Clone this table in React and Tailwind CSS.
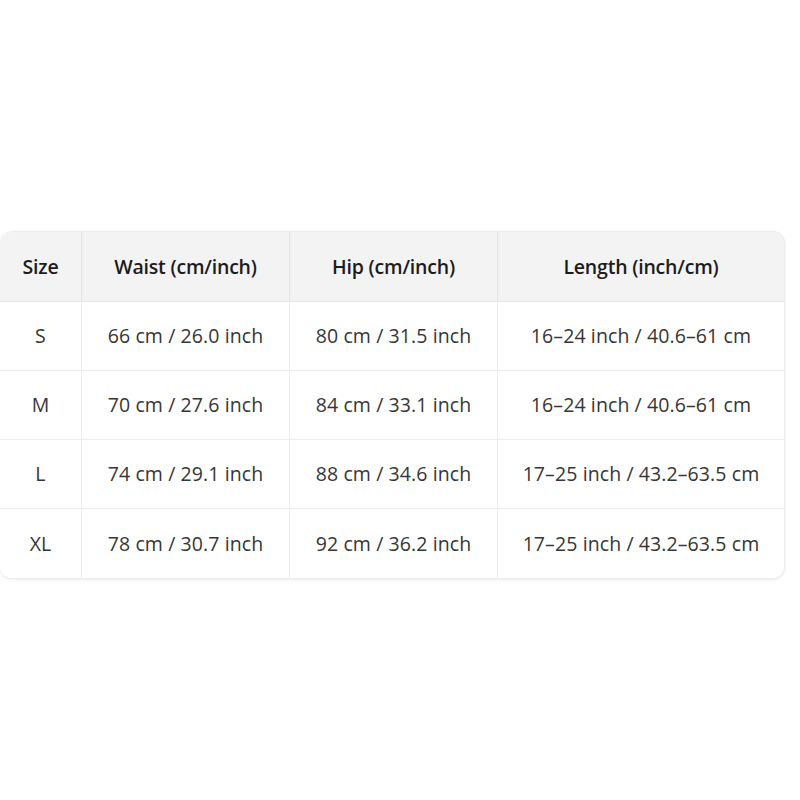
export default function App() {
    const rows = [
        ["S", "66 cm / 26.0 inch", "80 cm / 31.5 inch", "16–24 inch / 40.6–61 cm"],
        ["M", "70 cm / 27.6 inch", "84 cm / 33.1 inch", "16–24 inch / 40.6–61 cm"],
        ["L", "74 cm / 29.1 inch", "88 cm / 34.6 inch", "17–25 inch / 43.2–63.5 cm"],
        ["XL", "78 cm / 30.7 inch", "92 cm / 36.2 inch", "17–25 inch / 43.2–63.5 cm"],
    ]
    const heads = ["Size", "Waist (cm/inch)", "Hip (cm/inch)", "Length (inch/cm)"]

    return (
        <div className="w-[800px] h-[800px] bg-white pt-[231px]" style={{fontFamily: '"Open Sans", "Liberation Sans", sans-serif'}}>
            <div className="w-[785px] rounded-xl overflow-hidden shadow-[0_1px_3px_rgba(0,0,0,0.08)] border border-[#ececec] border-l-0">
                <div className="grid grid-cols-[81px_208px_208px_1fr] h-[70px] bg-[#f3f3f3] border-b border-[#e6e6e6]">
                    {heads.map((h, i) => (
                        <div key={h} className={"flex items-center justify-center text-[19.5px] tracking-[-0.2px] font-semibold text-[#1c1c1c] " + (i > 0 ? "border-l border-[#e3e3e3]" : "")}>{h}</div>
                    ))}
                </div>
                {rows.map((r, ri) => (
                    <div key={r[0]} className={"grid grid-cols-[81px_208px_208px_1fr] h-[69px] " + (ri < rows.length - 1 ? "border-b border-[#ececec]" : "")}>
                        {r.map((c, i) => (
                            <div key={i} className={"flex items-center justify-center text-[19.5px] tracking-[0.1px] text-[#363636] " + (i > 0 ? "border-l border-[#ececec]" : "")}>{c}</div>
                        ))}
                    </div>
                ))}
            </div>
        </div>
    )
}
